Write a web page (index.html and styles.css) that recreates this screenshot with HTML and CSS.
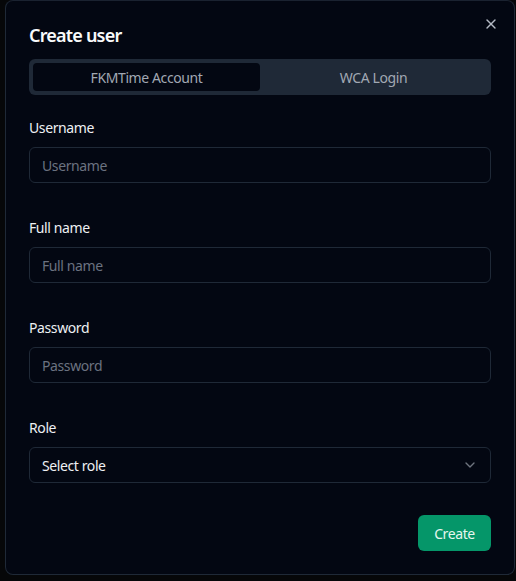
FILE: index.html
```html
<!DOCTYPE html>
<html lang="en">
<head>
<meta charset="utf-8">
<title>Create user</title>
<link rel="stylesheet" href="styles.css">
</head>
<body>
<div class="dialog" role="dialog">
  <button class="close" aria-label="Close">
    <svg width="16" height="16" viewBox="0 0 24 24" fill="none" stroke="currentColor" stroke-width="2" stroke-linecap="round" stroke-linejoin="round"><path d="M18 6 6 18"/><path d="m6 6 12 12"/></svg>
  </button>
  <h2 class="title">Create user</h2>
  <div class="tabs">
    <div class="tab active">FKMTime Account</div>
    <div class="tab">WCA Login</div>
  </div>
  <form class="form">
    <div class="field">
      <label class="label">Username</label>
      <input class="input" placeholder="Username">
    </div>
    <div class="field">
      <label class="label">Full name</label>
      <input class="input" placeholder="Full name">
    </div>
    <div class="field">
      <label class="label">Password</label>
      <input class="input" type="password" placeholder="Password">
    </div>
    <div class="field">
      <label class="label">Role</label>
      <div class="select">
        <span>Select role</span>
        <svg class="chev" width="16" height="16" viewBox="0 0 24 24" fill="none" stroke="currentColor" stroke-width="2" stroke-linecap="round" stroke-linejoin="round"><path d="m6 9 6 6 6-6"/></svg>
      </div>
    </div>
    <div class="actions">
      <button type="button" class="btn">Create</button>
    </div>
  </form>
</div>
</body>
</html>
```
FILE: styles.css
```css
* { box-sizing: border-box; }
html, body { margin: 0; padding: 0; }
body {
  background: #060709;
  width: 516px;
  height: 581px;
  overflow: hidden;
  font-family: "Noto Sans", "Open Sans", sans-serif;
  font-size: 14px;
  letter-spacing: -0.4px;
  color: #f3f4f6;
}
.dialog {
  position: relative;
  margin-left: 5px;
  width: 510px;
  height: 575px;
  background: #030712;
  border: 1px solid #1f2937;
  border-top-color: #1a2230;
  border-radius: 8px;
  padding: 20px 23px 23px;
}
.close {
  position: absolute;
  top: 15px;
  right: 15px;
  width: 16px;
  height: 16px;
  padding: 0;
  border: 0;
  background: none;
  color: #b4bac4;
  display: flex;
}
.title {
  margin: 0;
  font-size: 18px;
  line-height: 28px;
  font-weight: 600;
  letter-spacing: -0.8px;
  color: #f9fafb;
}
.tabs {
  margin-top: 10px;
  height: 36px;
  background: #1f2937;
  border-radius: 6px;
  padding: 4px;
  display: grid;
  grid-template-columns: 1fr 1fr;
}
.tab {
  display: flex;
  align-items: center;
  justify-content: center;
  color: #a1a8b3;
  border-radius: 4px;
  font-size: 14px;
}
.tab.active {
  background: #030712;
}
.form {
  margin-top: 23px;
  display: flex;
  flex-direction: column;
  gap: 35px;
}
.field {
  display: flex;
  flex-direction: column;
  gap: 9px;
}
.label {
  line-height: 20px;
  font-size: 14px;
  color: #eef0f3;
}
.input, .select {
  height: 36px;
  width: 100%;
  background: #030712;
  border: 1px solid #1f2937;
  border-radius: 6px;
  padding: 0 12px;
  font: inherit;
  font-size: 14px;
  letter-spacing: -0.4px;
  color: #f3f4f6;
  outline: none;
}
.input::placeholder { color: #6b7280; }
.select {
  display: flex;
  align-items: center;
  justify-content: space-between;
  color: #eef0f3;
}
.chev { color: #8b919b; opacity: 0.8; }
.actions {
  margin-top: -3px;
  display: flex;
  justify-content: flex-end;
}
.btn {
  height: 36px;
  padding: 0 16px;
  min-width: 73px;
  border: 0;
  border-radius: 6px;
  background: #059669;
  color: #e6f7ef;
  font: inherit;
  font-size: 14px;
  letter-spacing: -0.4px;
}
```
